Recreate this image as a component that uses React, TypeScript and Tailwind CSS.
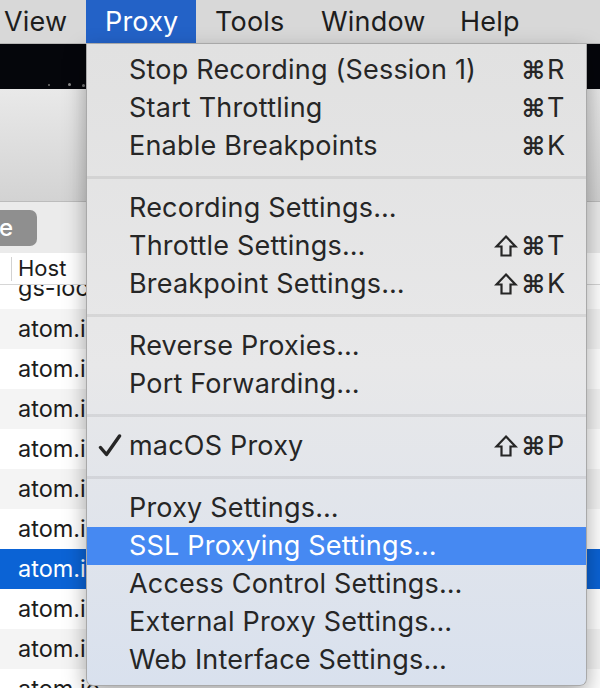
import React from "react";

type Item = { label: string; sc?: string; check?: boolean; hl?: boolean };

const groups: Item[][] = [
  [
    { label: "Stop Recording (Session 1)", sc: "⌘R" },
    { label: "Start Throttling", sc: "⌘T" },
    { label: "Enable Breakpoints", sc: "⌘K" },
  ],
  [
    { label: "Recording Settings…" },
    { label: "Throttle Settings…", sc: "⇧⌘T" },
    { label: "Breakpoint Settings…", sc: "⇧⌘K" },
  ],
  [{ label: "Reverse Proxies…" }, { label: "Port Forwarding…" }],
  [{ label: "macOS Proxy", sc: "⇧⌘P", check: true }],
  [
    { label: "Proxy Settings…" },
    { label: "SSL Proxying Settings…", hl: true },
    { label: "Access Control Settings…" },
    { label: "External Proxy Settings…" },
    { label: "Web Interface Settings…" },
  ],
];

const rows = [
  { bg: "bg-[#f4f4f4]" },
  { bg: "bg-white" },
  { bg: "bg-[#f4f4f4]" },
  { bg: "bg-white" },
  { bg: "bg-[#f4f4f4]" },
  { bg: "bg-white" },
  { bg: "bg-[#0b63d5]", sel: true },
  { bg: "bg-white" },
  { bg: "bg-[#f4f4f4]" },
  { bg: "bg-white" },
];

function Shortcut({ sc, hl }: { sc: string; hl?: boolean }) {
  const chars = Array.from(sc);
  return (
    <div className={`flex items-center ${hl ? "text-white" : "text-[#262626]"}`}>
      {chars.map((c, i) => {
        if (c === "⇧")
          return (
            <svg key={i} width="24" height="24" viewBox="0 0 24 24" className="mr-[3px]">
              <path
                d="M12 2.5 L21.5 12.5 L16.5 12.5 L16.5 21.5 L7.5 21.5 L7.5 12.5 L2.5 12.5 Z"
                fill="none"
                stroke="currentColor"
                strokeWidth="2.2"
                strokeLinejoin="miter"
              />
            </svg>
          );
        if (c === "⌘")
          return (
            <span key={i} className="font-['DejaVu_Sans'] font-bold text-[25px] leading-none w-[25px] text-center mr-[1px]">
              ⌘
            </span>
          );
        return (
          <span key={i} className="w-[19px]">
            {c}
          </span>
        );
      })}
    </div>
  );
}

export default function App() {
  return (
    <div className="relative w-[600px] h-[688px] overflow-hidden bg-white font-['Inter','DejaVu_Sans',sans-serif] text-[#1c1c1c]">
      {/* menu bar */}
      <div className="flex h-[44px] items-stretch bg-[#d8d8d8] border-b border-[#b6b6b6] text-[27px] tracking-[0.2px] text-[#1d1d1d]">
        <div className="flex items-center pt-[2px] pl-[4px] w-[86px]">View</div>
        <div className="flex items-center pt-[2px] px-[19px] bg-[#2362c7] text-white w-[110px]">Proxy</div>
        <div className="flex items-center pt-[2px] px-[19px] w-[106px]">Tools</div>
        <div className="flex items-center pt-[2px] px-[19px] w-[139px]">Window</div>
        <div className="flex items-center pt-[2px] px-[19px]">Help</div>
      </div>

      {/* app window behind */}
      <div className="flex flex-col">
        <div className="relative h-[45px] bg-[#05060b]">
          <span className="absolute left-[48px] top-[40px] w-[2px] h-[2px] bg-[#555]" />
          <span className="absolute left-[68px] top-[39px] w-[3px] h-[3px] rounded-full bg-[#888]" />
          <span className="absolute left-[82px] top-[40px] w-[3px] h-[3px] rounded-full bg-[#777]" />
        </div>
        <div className="h-[113px] bg-gradient-to-b from-[#e9e9e9] to-[#d3d3d3] border-b border-[#bcbcbc]" />
        <div className="h-[51px] bg-[#ebebeb] flex items-center">
          <div className="ml-[-60px] h-[36px] w-[97px] rounded-[7px] bg-[#8f8f8f] text-white text-[24px] font-medium flex items-center justify-end pr-[24px]">
            e
          </div>
        </div>
        <div className="h-[32px] bg-white border-b border-[#d6d6d6] flex items-center text-[22px]">
          <div className="ml-[11px] w-[1px] h-[24px] bg-[#d2d2d2]" />
          <span className="ml-[6px]">Host</span>
        </div>
        <div className="h-[24px] overflow-hidden bg-white">
          <div className="h-[40px] mt-[-17px] flex items-center pl-[18px] text-[23.5px]">gs-loc.apple.com</div>
        </div>
        {rows.map((r, i) => (
          <div
            key={i}
            className={`h-[40px] shrink-0 flex items-center pl-[18px] text-[23.5px] ${r.bg} ${r.sel ? "text-white" : "text-[#1c1c1c]"}`}
          >
            atom.io
          </div>
        ))}
      </div>

      {/* dropdown menu */}
      <div className="absolute left-[86px] top-[44px] w-[501px] h-[642px] rounded-b-[7px] border border-t-0 border-[#a9a9a9] bg-gradient-to-b from-[#e1e1e1] via-[#e8e8e9] to-[#d9e1ee] shadow-[0_8px_22px_rgba(0,0,0,0.35)] pt-[7px] text-[27px] tracking-[0.2px] text-[#262626]">
        {groups.map((g, gi) => (
          <div key={gi}>
            {gi > 0 && (
              <div className="h-[24px] pt-[11px]">
                <div className="h-[3px] bg-black/[0.07]" />
              </div>
            )}
            {g.map((it) => (
              <div
                key={it.label}
                className={`relative flex h-[38px] items-center pl-[42px] pr-[20px] ${it.hl ? "bg-[#4689f2] text-white" : ""}`}
              >
                {it.check && (
                  <svg className="absolute left-[11px] top-[7px]" width="24" height="24" viewBox="0 0 24 24">
                    <path d="M2.5 13.5 L8.5 20.5 L21.5 2" fill="none" stroke="#262626" strokeWidth="3.4" strokeLinecap="round" strokeLinejoin="round" />
                  </svg>
                )}
                <span className="flex-1 whitespace-nowrap">{it.label}</span>
                {it.sc && <Shortcut sc={it.sc} hl={it.hl} />}
              </div>
            ))}
          </div>
        ))}
      </div>
    </div>
  );
}
